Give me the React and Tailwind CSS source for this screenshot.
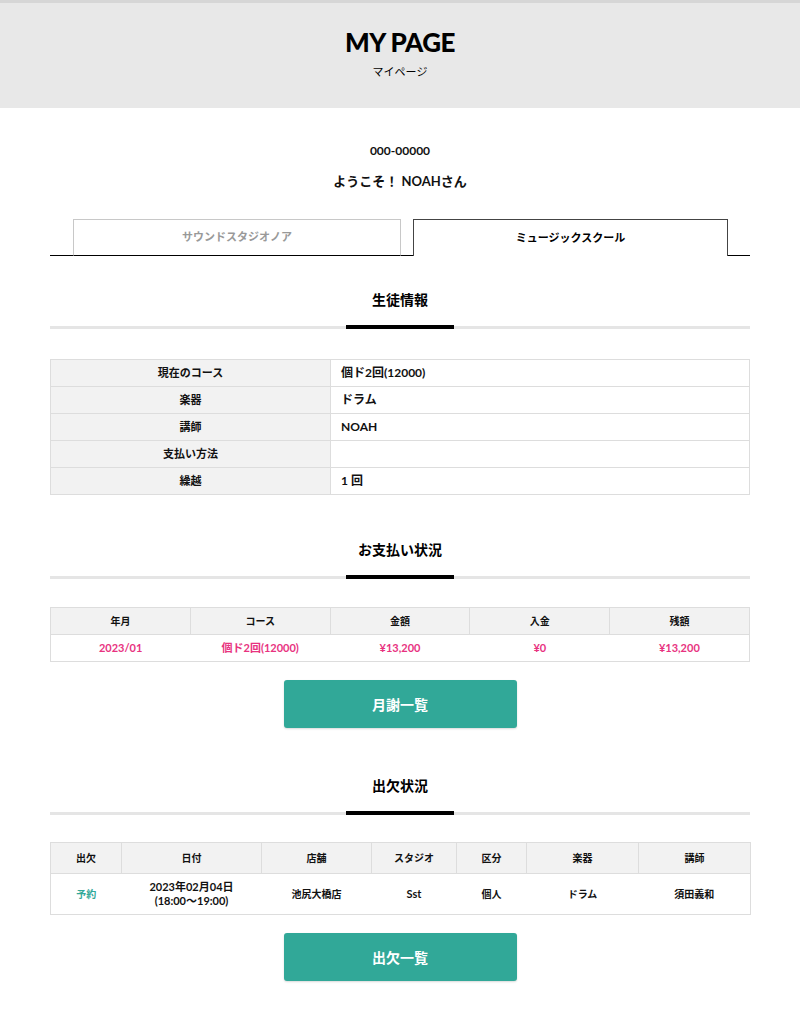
const font = { fontFamily: "Lato, 'Noto Sans CJK JP', sans-serif" };

function SectionTitle({ children }) {
  return (
    <div>
      <h2 className="text-center text-[14px] font-bold leading-[20px] text-black">{children}</h2>
      <div className="mt-[15px] flex h-[4px] items-center">
        <div className="h-[3px] flex-1 bg-[#e5e5e5]" />
        <div className="h-[4px] w-[108px] bg-black" />
        <div className="h-[3px] flex-1 bg-[#e5e5e5]" />
      </div>
    </div>
  );
}

function Button({ children }) {
  return (
    <div className="flex justify-center">
      <button className="h-[48px] w-[233px] rounded-[3px] bg-[#31a898] text-[14px] font-bold text-white shadow-[0_1px_2px_rgba(0,0,0,0.15)]">
        {children}
      </button>
    </div>
  );
}

const info = [
  ['現在のコース', '個ド2回(12000)'],
  ['楽器', 'ドラム'],
  ['講師', 'NOAH'],
  ['支払い方法', ''],
  ['繰越', '1 回'],
];

const payHead = ['年月', 'コース', '金額', '入金', '残額'];
const payRow = ['2023/01', '個ド2回(12000)', '¥13,200', '¥0', '¥13,200'];

const attCols = ['w-[71px]', 'w-[140px]', 'w-[110px]', 'w-[85px]', 'w-[70px]', 'w-[112px]', 'w-[112px]'];
const attHead = ['出欠', '日付', '店舗', 'スタジオ', '区分', '楽器', '講師'];

export default function App() {
  return (
    <div className="min-h-[1024px] bg-white text-[#111]" style={font}>
      <header className="flex h-[108px] flex-col items-center border-t-[3px] border-[#d6d6d6] bg-[#e8e8e8] pt-[23px]">
        <h1 className="text-[26px] font-black leading-[32px] tracking-[-0.5px] text-black">MY PAGE</h1>
        <p className="mt-[7px] text-[11px] leading-[14px] text-black">マイページ</p>
      </header>

      <div className="mx-auto w-[700px]">
        <p className="mt-[35px] text-center text-[12px] font-bold leading-[16px]">000-00000</p>
        <p className="mt-[13px] text-center text-[13px] font-bold leading-[18px]">ようこそ！ NOAHさん</p>

        <div className="mt-[29px] flex items-end">
          <div className="w-[23px] border-b border-black" />
          <div className="flex h-[37px] w-[328px] items-center justify-center border border-[#c8c8c8] border-b-black text-[11px] font-bold text-[#999]">
            サウンドスタジオノア
          </div>
          <div className="w-[12px] border-b border-black" />
          <div className="flex h-[37px] w-[315px] items-center justify-center border-x border-t border-[#444] text-[11px] font-bold text-black">
            ミュージックスクール
          </div>
          <div className="flex-1 border-b border-black" />
        </div>

        <div className="mt-[34px]">
          <SectionTitle>生徒情報</SectionTitle>
        </div>

        <table className="mt-[30px] w-full border-collapse border border-[#ddd] text-[11px]">
          <tbody>
            {info.map(([k, v]) => (
              <tr key={k} className="h-[27px]">
                <th className="w-[280px] border border-[#ddd] bg-[#f2f2f2] p-0 text-center font-bold">{k}</th>
                <td className="border border-[#ddd] px-[10px] py-0 text-[12px] font-bold">{v}</td>
              </tr>
            ))}
          </tbody>
        </table>

        <div className="mt-[45px]">
          <SectionTitle>お支払い状況</SectionTitle>
        </div>

        <table className="mt-[28px] w-full table-fixed border-collapse border border-[#ddd]">
          <thead>
            <tr className="h-[27px]">
              {payHead.map((h) => (
                <th key={h} className="border border-[#ddd] bg-[#f2f2f2] p-0 text-[10px] font-bold">{h}</th>
              ))}
            </tr>
          </thead>
          <tbody>
            <tr className="h-[27px]">
              {payRow.map((c, i) => (
                <td key={i} className="border-b border-[#ddd] p-0 text-center text-[11px] font-bold text-[#e8337f]">{c}</td>
              ))}
            </tr>
          </tbody>
        </table>

        <div className="mt-[18px]">
          <Button>月謝一覧</Button>
        </div>

        <div className="mt-[48px]">
          <SectionTitle>出欠状況</SectionTitle>
        </div>

        <table className="mt-[27px] w-full table-fixed border-collapse border border-[#ddd]">
          <thead>
            <tr className="h-[31px]">
              {attHead.map((h, i) => (
                <th key={h} className={`${attCols[i]} border border-[#ddd] bg-[#f2f2f2] p-0 text-[10px] font-bold`}>{h}</th>
              ))}
            </tr>
          </thead>
          <tbody>
            <tr className="h-[41px] text-center text-[10px] font-bold">
              <td className="p-0 text-[#31a898]">予約</td>
              <td className="p-0 text-[11px] leading-[14px]">2023年02月04日<br />(18:00〜19:00)</td>
              <td className="p-0">池尻大橋店</td>
              <td className="p-0 text-[11px]">Sst</td>
              <td className="p-0">個人</td>
              <td className="p-0">ドラム</td>
              <td className="p-0">須田義和</td>
            </tr>
          </tbody>
        </table>

        <div className="mt-[18px] pb-[44px]">
          <Button>出欠一覧</Button>
        </div>
      </div>
    </div>
  );
}
